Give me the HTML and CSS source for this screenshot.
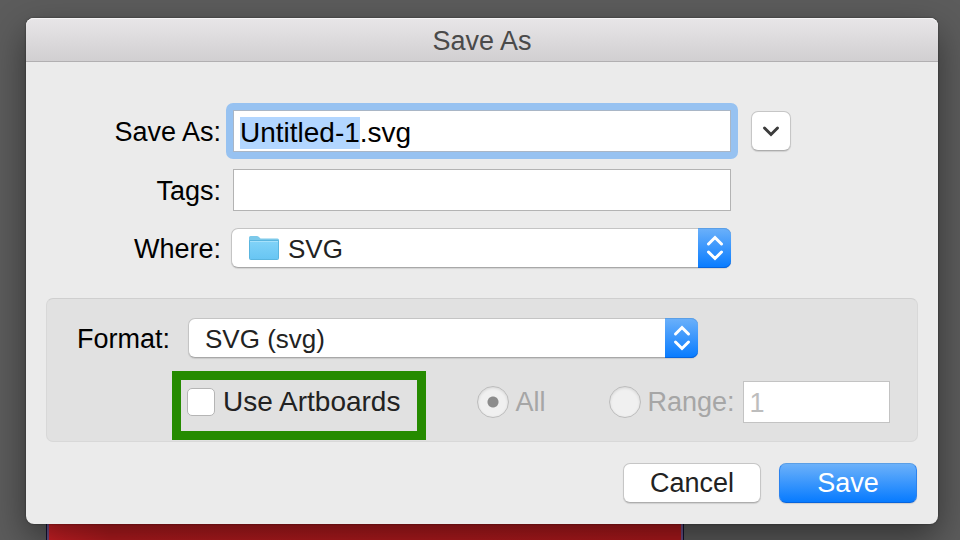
FILE: index.html
```html
<!DOCTYPE html>
<html lang="en">
<head>
<meta charset="UTF-8">
<meta name="viewport" content="width=device-width, initial-scale=1.0">
<title>Save As</title>
<link rel="stylesheet" href="styles.css">
</head>
<body>
<main class="dialog">
  <header class="titlebar">
    <h1>Save As</h1>
  </header>
  <form class="form">
    <div class="fields">
      <label for="filename">Save As:</label>
      <input type="text" id="filename" class="text focused" value="Untitled-1.svg" autocomplete="off" spellcheck="false" autofocus>
      <button type="button" class="btn expand" aria-label="Expand">
        <svg width="18" height="12" viewBox="0 0 18 12"><path d="M2.500 3 9 9.500 15.500 3"/></svg>
      </button>

      <label for="tags">Tags:</label>
      <input type="text" id="tags" class="text">

      <label for="where">Where:</label>
      <div class="popup where">
        <select id="where">
          <option>SVG</option>
        </select>
        <svg class="folder" width="32" height="26" viewBox="0 0 32 26">
          <defs>
            <linearGradient id="folder-fill" x1="0" y1="0" x2="0" y2="1">
              <stop offset="0" stop-color="#82d3f8"/>
              <stop offset="1" stop-color="#67c5f3"/>
            </linearGradient>
          </defs>
          <path d="M1 2.500Q1 1 2.500 1H9Q10.500 1 11.500 2.500L12.500 3.500H29.500Q31 3.500 31 5V23H1Z" fill="#7cc9ea"/>
          <path d="M1.500 5.500H30.500V23.500Q30.500 24.500 29.500 24.500H2.500Q1.500 24.500 1.500 23.500Z" fill="url(#folder-fill)" stroke="#5ab5df"/>
          <path d="M2 6.500H30" stroke="#a5e1fb"/>
        </svg>
        <span class="arrows">
          <svg width="18" height="26" viewBox="0 0 18 26"><path d="M2.500 9 9 2.500 15.500 9M2.500 17 9 23.500 15.500 17"/></svg>
        </span>
      </div>
    </div>

    <section class="panel">
      <div class="format">
        <label for="format">Format:</label>
        <div class="popup">
          <select id="format">
            <option>SVG (svg)</option>
          </select>
          <span class="arrows">
            <svg width="18" height="26" viewBox="0 0 18 26"><path d="M2.500 9 9 2.500 15.500 9M2.500 17 9 23.500 15.500 17"/></svg>
          </span>
        </div>
      </div>
      <div class="options">
        <div class="highlight">
          <label class="option"><input type="checkbox" class="check">Use Artboards</label>
        </div>
        <div class="pages">
          <label class="option"><input type="radio" name="pages" class="radio" checked disabled>All</label>
          <label class="option"><input type="radio" name="pages" class="radio" disabled>Range:</label>
          <input type="text" class="text range" value="1" aria-label="Artboard range" disabled>
        </div>
      </div>
    </section>

    <div class="actions">
      <button type="button" class="btn">Cancel</button>
      <button type="button" class="btn primary">Save</button>
    </div>
  </form>
</main>
<div class="artboard"></div>
<script>
  // select the name without its extension
  const nameInput = document.getElementById('filename');
  nameInput.focus();
  nameInput.setSelectionRange(0, nameInput.value.lastIndexOf('.'));
</script>
</body>
</html>
```
FILE: styles.css
```css
* {
  box-sizing: border-box;
}
body {
  display: flex;
  flex-direction: column;
  min-height: 100vh;
  margin: 0;
  padding-top: 18px;
  background-color: #5c5c5c;
  color: #000;
  font-family: "Liberation Sans", Arial, sans-serif;
  font-size: 27px;
  line-height: 34px;
}
input,
select,
button {
  margin: 0;
  font: inherit;
  color: inherit;
}
svg {
  display: block;
  fill: none;
}
.dialog {
  position: relative;
  margin: 0 22px 0 26px;
  border-radius: 8px;
  background-color: #ebebeb;
  box-shadow: 0 0 2px rgba(0, 0, 0, 0.5), 0 14px 36px rgba(0, 0, 0, 0.45);
}
.titlebar {
  height: 44px;
  border-bottom: 1px solid #b1afb1;
  border-radius: 8px 8px 0 0;
  background: linear-gradient(#e8e6e8, #d1cfd1);
  box-shadow: inset 0 1px 0 #f4f3f4;
}
.titlebar h1 {
  margin: 0;
  padding-top: 6px;
  color: #4a4a4a;
  font-size: 27px;
  font-weight: 400;
  text-align: center;
}

/* name, tags, folder */
.fields {
  display: grid;
  grid-template-columns: 195px 1fr 40px;
  align-items: center;
  gap: 17px 12px;
  padding: 48px 147px 0 0;
}
.fields label {
  grid-column: 1;
  padding-top: 2px;
  text-align: right;
}
.text {
  width: 100%;
  height: 42px;
  padding: 3px 6px 0;
  border: 1px solid #b3b3b3;
  border-radius: 0;
  background-color: #fff;
  line-height: 34px;
  outline: none;
}
.fields .text,
.where {
  margin-right: 8px;
  width: auto;
}
.fields .focused {
  height: 56px;
  margin: -7px 1px -7px -7px;
  padding: 3px 7px 0;
  border: 7px solid #97c2f1;
  border-radius: 7px;
  box-shadow: inset 0 0 0 1px #a9b6c6;
  font-size: 28px;
}
.text::selection {
  background-color: #b2d6ff;
  color: #000;
}
.btn {
  width: 138px;
  height: 40px;
  padding: 0;
  border: 1px solid #c6c6c6;
  border-bottom-color: #adadad;
  border-radius: 7px;
  background-color: #fff;
  box-shadow: 0 1px 1px rgba(0, 0, 0, 0.12);
  color: #222;
}
.expand {
  display: flex;
  align-items: center;
  justify-content: center;
  width: 40px;
}
.expand svg {
  stroke: #3c3c3c;
  stroke-width: 3;
  stroke-linecap: round;
}
.popup {
  position: relative;
}
.popup select {
  display: block;
  width: 100%;
  height: 40px;
  padding: 1px 40px 0 16px;
  border: 1px solid #c4c4c4;
  border-bottom-color: #a8a8a8;
  border-radius: 7px;
  background-color: #fff;
  box-shadow: 0 1px 1px rgba(0, 0, 0, 0.1);
  color: #222;
  font-size: 26px;
  appearance: none;
}
.where {
  margin-left: -2px;
}
.where select {
  padding-left: 56px;
}
.folder {
  position: absolute;
  top: 7px;
  left: 17px;
}
.arrows {
  position: absolute;
  top: 0;
  right: 0;
  display: flex;
  align-items: center;
  justify-content: center;
  width: 33px;
  height: 40px;
  border-radius: 0 7px 7px 0;
  background: linear-gradient(#6cb1fa, #077bff);
  box-shadow: inset 0 1px 0 #5b9fe6, inset 0 -1px 0 #0764dc;
  pointer-events: none;
}
.arrows svg {
  stroke: #fff;
  stroke-width: 3;
  stroke-linecap: round;
}

/* format options */
.panel {
  margin: 30px 20px 0;
  padding: 19px 27px 1px 0;
  border: 1px solid #d8d8d8;
  border-top-color: #cfcfcf;
  border-radius: 7px;
  background-color: #e1e1e1;
}
.format {
  display: flex;
  align-items: center;
  gap: 18px;
  margin-right: 192px;
}
.format label {
  width: 123px;
  padding-top: 2px;
  text-align: right;
}
.format .popup {
  flex: 1;
}
.options {
  display: flex;
  align-items: flex-start;
  margin: 13px 0 0 125px;
}
.highlight {
  padding: 1px 17px 8px 6px;
  border: 9px solid #258b00;
  color: #222;
  font-size: 28px;
}
.option {
  display: flex;
  align-items: center;
  gap: 8px;
  height: 42px;
}
.check,
.radio {
  flex: none;
  appearance: none;
}
.check {
  width: 28px;
  height: 28px;
  border: 1px solid #b5b5b5;
  border-radius: 5px;
  background-color: #fff;
}
.pages {
  display: flex;
  flex: 1;
  margin: 10px 0 0 51px;
  color: #a6a6a6;
}
.pages .option {
  gap: 6px;
}
.pages .option + .option {
  margin: 0 8px 0 64px;
}
.radio {
  width: 32px;
  height: 32px;
  border: 1px solid #bcbcbc;
  border-radius: 50%;
  background-color: #f0f0f0;
  box-shadow: inset 0 1px 3px rgba(0, 0, 0, 0.12);
}
.radio:checked {
  background-image: radial-gradient(circle, #8c8c8c 5px, transparent 6px);
}
.range {
  flex: 1;
  min-width: 0;
  border-color: #c3c3c3;
  color: #bdbdbd;
}

.actions {
  display: flex;
  justify-content: flex-end;
  gap: 18px;
  padding: 21px;
}
.primary {
  border-color: #5b9fe6 #2b82ee #0764dc;
  background: linear-gradient(#6cb1fa, #077bff);
  color: #fff;
}

/* document behind the dialog */
.artboard {
  flex: 1;
  width: 636px;
  margin-left: 47px;
  border: solid #6a5088;
  border-width: 0 2px;
  background: linear-gradient(90deg, #d42026, #b81b1f 60px, #b3191d);
  outline: 1px solid #10132f;
}
```
